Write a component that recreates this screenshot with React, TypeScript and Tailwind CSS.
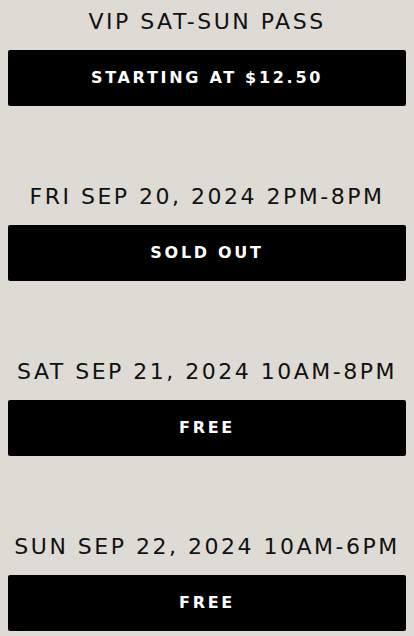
import React from 'react';

const passes = [
  { title: 'VIP SAT-SUN PASS', label: 'STARTING AT $12.50' },
  { title: 'FRI SEP 20, 2024 2PM-8PM', label: 'SOLD OUT' },
  { title: 'SAT SEP 21, 2024 10AM-8PM', label: 'FREE' },
  { title: 'SUN SEP 22, 2024 10AM-6PM', label: 'FREE' },
];

const App: React.FC = () => {
  return (
    <div
      className="min-h-[636px] bg-[#dedbd4] px-2 pt-[7px]"
      style={{ fontFamily: '"DejaVu Sans", "Liberation Sans", sans-serif' }}
    >
      <div className="flex flex-col gap-[76px]">
        {passes.map((p) => (
          <div key={p.title} className="flex flex-col">
            <h2 className="text-center text-[22px] leading-[30px] tracking-[2.5px] text-[#111] mb-[13px]">
              {p.title}
            </h2>
            <button className="h-[56px] w-full rounded-[2px] bg-black text-white text-[16px] font-semibold tracking-[2.7px]">
              {p.label}
            </button>
          </div>
        ))}
      </div>
    </div>
  );
};

export default App;
